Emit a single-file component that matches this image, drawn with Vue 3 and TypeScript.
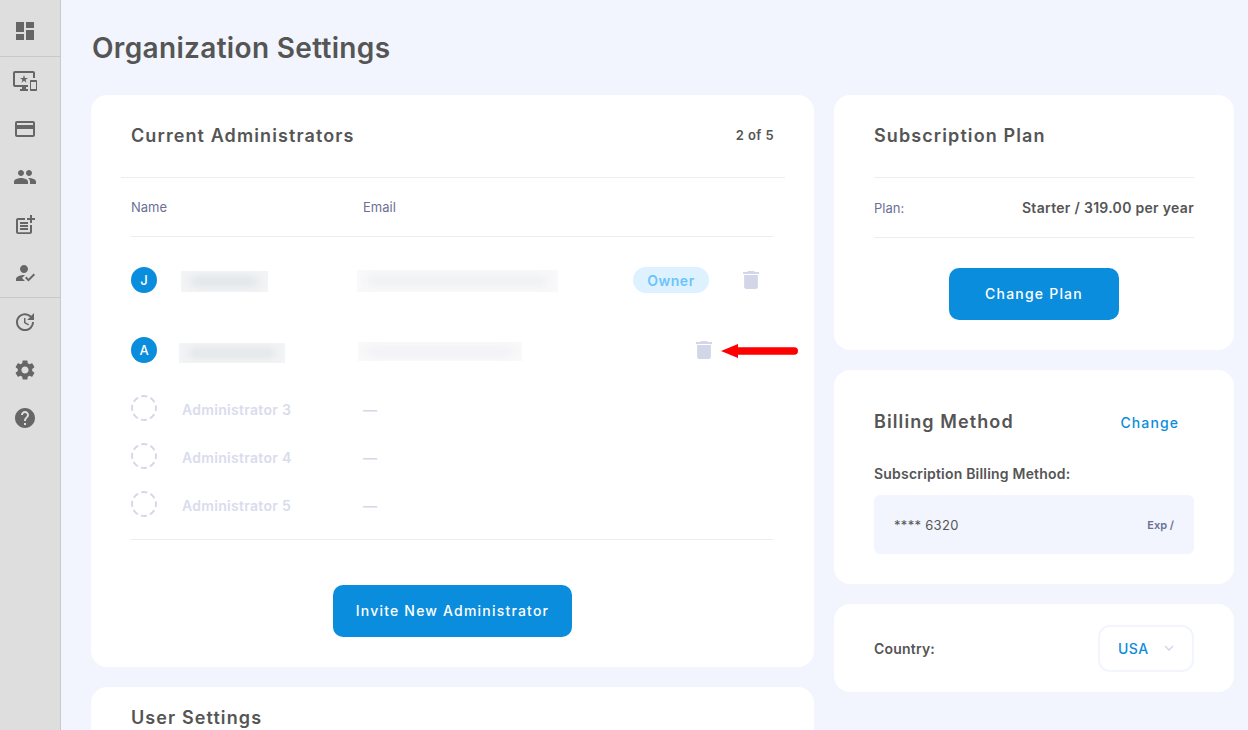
<script setup lang="ts">
interface NavIcon { paths: string[] }
const groups: NavIcon[][] = [
  [{ paths: ['M3 13h8V3H3v10zm0 8h8v-6H3v6zm10 0h8V11h-8v10zm0-18v6h8V3h-8z'] }],
  [
    { paths: ['M23 11.01L18 11c-.55 0-1 .45-1 1v9c0 .55.45 1 1 1h5c.55 0 1-.45 1-1v-9c0-.55-.45-.99-1-.99zM23 20h-5v-7h5v7zM20 2H2C.89 2 0 2.89 0 4v12c0 1.1.89 2 2 2h7v2H7v2h8v-2h-2v-2h2v-2H2V4h18v5h2V4c0-1.11-.9-2-2-2zm-8.03 7L11 6l-.97 3H7l2.47 1.76-.94 2.91 2.47-1.8 2.47 1.8-.94-2.91L15 9h-3.03z'] },
    { paths: ['M20 4H4c-1.11 0-1.99.89-1.99 2L2 18c0 1.11.89 2 2 2h16c1.11 0 2-.89 2-2V6c0-1.11-.89-2-2-2zm0 14H4v-6h16v6zm0-10H4V6h16v2z'] },
    { paths: ['M16 11c1.66 0 2.99-1.34 2.99-3S17.66 5 16 5c-1.66 0-3 1.34-3 3s1.34 3 3 3zm-8 0c1.66 0 2.99-1.34 2.99-3S9.66 5 8 5C6.34 5 5 6.34 5 8s1.34 3 3 3zm0 2c-2.33 0-7 1.17-7 3.5V19h14v-2.5c0-2.33-4.67-3.5-7-3.5zm8 0c-.29 0-.62.02-.97.05 1.16.84 1.97 1.97 1.97 3.45V19h6v-2.5c0-2.33-4.67-3.5-7-3.5z'] },
    { paths: ['M17 19.22H5V7h7V5H5c-1.1 0-2 .9-2 2v12c0 1.1.9 2 2 2h12c1.1 0 2-.9 2-2v-7h-2v7.22z', 'M19 2h-2v3h-3c.01.01 0 2 0 2h3v2.99c.01.01 2 0 2 0V7h3V5h-3V2z', 'M7 9h8v2H7z', 'M7 12v2h8v-2h-3z', 'M7 15h8v2H7z'] },
    { paths: ['M9 17l3-2.94c-.39-.04-.68-.06-1-.06-2.67 0-8 1.34-8 4v2h9l-3-3zm2-5c2.21 0 4-1.79 4-4s-1.79-4-4-4-4 1.79-4 4 1.79 4 4 4', 'M15.47 20.5L12 17l1.4-1.41 2.07 2.07 5.13-5.16 1.4 1.41z'] },
  ],
  [
    { paths: ['M21 10.12h-6.78l2.74-2.82c-2.73-2.7-7.15-2.8-9.88-.1-2.73 2.71-2.73 7.08 0 9.79s7.15 2.71 9.88 0C18.32 15.65 19 14.08 19 12.1h2c0 1.98-.88 4.55-2.64 6.29-3.51 3.48-9.21 3.48-12.72 0-3.5-3.47-3.53-9.11-.02-12.58s9.14-3.47 12.65 0L21 3v7.12zM12.5 8v4.25l3.5 2.08-.72 1.21L11 13V8h1.5z'] },
    { paths: ['M19.14 12.94c.04-.3.06-.61.06-.94 0-.32-.02-.64-.07-.94l2.03-1.58c.18-.14.23-.41.12-.61l-1.92-3.32c-.12-.22-.37-.29-.59-.22l-2.39.96c-.5-.38-1.03-.7-1.62-.94l-.36-2.54c-.04-.24-.24-.41-.48-.41h-3.84c-.24 0-.43.17-.47.41l-.36 2.54c-.59.24-1.13.57-1.62.94l-2.39-.96c-.22-.08-.47 0-.59.22L2.74 8.87c-.12.21-.08.47.12.61l2.03 1.58c-.05.3-.09.63-.09.94s.02.64.07.94l-2.03 1.58c-.18.14-.23.41-.12.61l1.92 3.32c.12.22.37.29.59.22l2.39-.96c.5.38 1.03.7 1.62.94l.36 2.54c.05.24.24.41.48.41h3.84c.24 0 .44-.17.47-.41l.36-2.54c.59-.24 1.13-.56 1.62-.94l2.39.96c.22.08.47 0 .59-.22l1.92-3.32c.12-.22.07-.47-.12-.61l-2.01-1.58zM12 15.6c-1.98 0-3.6-1.62-3.6-3.6s1.62-3.6 3.6-3.6 3.6 1.62 3.6 3.6-1.62 3.6-3.6 3.6z'] },
    { paths: ['M12 2C6.48 2 2 6.48 2 12s4.48 10 10 10 10-4.48 10-10S17.52 2 12 2zm1 17h-2v-2h2v2zm2.07-7.75l-.9.92C13.45 12.9 13 13.5 13 15h-2v-.5c0-1.1.45-2.1 1.17-2.83l1.24-1.26c.37-.36.59-.86.59-1.41 0-1.1-.9-2-2-2s-2 .9-2 2H8c0-2.21 1.79-4 4-4s4 1.79 4 4c0 .88-.36 1.68-.93 2.25z'] },
  ],
]
const trash = 'M6 19c0 1.1.9 2 2 2h8c1.1 0 2-.9 2-2V7H6v12zM19 4h-3.5l-1-1h-5l-1 1H5v2h14V4z'
const placeholders = ['Administrator 3', 'Administrator 4', 'Administrator 5']
</script>

<template>
  <div class="shell">
    <nav class="sidebar">
      <div v-for="(group, g) in groups" :key="g" class="nav-group">
        <div v-for="(icon, i) in group" :key="i" class="nav-item">
          <svg viewBox="0 0 24 24" width="24" height="24"><path v-for="p in icon.paths" :key="p" :d="p" /></svg>
        </div>
      </div>
    </nav>

    <main class="main">
      <h1 class="title">Organization Settings</h1>
      <div class="columns">
        <div class="col col-left">
          <section class="card admins">
            <header class="admins-head">
              <h2 class="heading">Current Administrators</h2>
              <span class="count">2 of 5</span>
            </header>
            <div class="admins-body">
              <div class="table-head">
                <span>Name</span>
                <span>Email</span>
              </div>

              <div class="row row-one">
                <span class="avatar">J</span>
                <span class="blur-name blur-a"></span>
                <span class="blur-email blur-c"></span>
                <span class="badge">Owner</span>
                <svg class="trash" viewBox="5 3 14 18" preserveAspectRatio="none" width="16" height="18"><path :d="trash" /></svg>
              </div>

              <div class="row row-two">
                <span class="avatar">A</span>
                <span class="blur-name blur-b"></span>
                <span class="blur-email blur-d"></span>
                <svg class="trash" viewBox="5 3 14 18" preserveAspectRatio="none" width="16" height="18"><path :d="trash" /></svg>
                <svg class="arrow" viewBox="0 0 77 16" width="77" height="16">
                  <path d="M0 8L17 1V4.3H73.3a3.7 3.7 0 0 1 0 7.4H17V15z" fill="#ff0000" />
                </svg>
              </div>

              <div v-for="name in placeholders" :key="name" class="row row-empty">
                <svg class="avatar-empty" viewBox="0 0 26 26" width="26" height="26">
                  <circle cx="13" cy="13" r="12" fill="none" stroke="#d5d8ea" stroke-width="2" stroke-dasharray="6 3.42" stroke-dashoffset="3" />
                </svg>
                <span class="empty-name">{{ name }}</span>
                <span class="empty-dash">—</span>
              </div>
            </div>
            <div class="admins-foot">
              <button class="btn btn-invite">Invite New Administrator</button>
            </div>
          </section>

          <section class="card user-settings">
            <h2 class="heading">User Settings</h2>
          </section>
        </div>

        <div class="col col-right">
          <section class="card plan">
            <h2 class="heading plan-title">Subscription Plan</h2>
            <div class="plan-row">
              <span class="plan-label">Plan:</span>
              <strong class="plan-value">Starter / 319.00 per year</strong>
            </div>
            <div class="plan-foot">
              <button class="btn btn-plan">Change Plan</button>
            </div>
          </section>

          <section class="card billing">
            <div class="billing-head">
              <h2 class="heading">Billing Method</h2>
              <a class="change">Change</a>
            </div>
            <div class="billing-label">Subscription Billing Method:</div>
            <div class="billing-box">
              <span class="card-num">**** 6320</span>
              <span class="exp">Exp /</span>
            </div>
          </section>

          <section class="card country">
            <span class="country-label">Country:</span>
            <div class="select">
              <span>USA</span>
              <svg viewBox="0 0 10 6" width="10" height="6"><path d="M1 1l4 4 4-4" fill="none" stroke="#d5d8ea" stroke-width="1.6" /></svg>
            </div>
          </section>
        </div>
      </div>
    </main>
  </div>
</template>

<style>
html, body { margin: 0; background: #f2f5fd; overflow: hidden; }
</style>

<style scoped>
.shell {
  display: flex;
  height: 730px;
  overflow: hidden;
  background: #f2f5fd;
  font-family: Inter, "Liberation Sans", sans-serif;
  color: #555;
}
.sidebar {
  width: 60px;
  flex: none;
  background: #dedede;
  border-right: 1px solid #c9c9c9;
}
.nav-group { border-bottom: 1px solid #c8c8c8; }
.nav-group:first-child { padding: 7px 0 1px; }
.nav-group:last-child { border-bottom: none; }
.nav-item {
  height: 48px;
  display: flex;
  align-items: center;
  padding-left: 13px;
}
.nav-item svg { fill: #666; }

.main { flex: 1; padding-left: 30px; min-width: 0; }
.title {
  margin: 0;
  padding: 30px 0 0 1px;
  height: 95px;
  box-sizing: border-box;
  font-size: 28px;
  line-height: 36px;
  font-weight: 600;
  color: #555;
  letter-spacing: 0.33px;
}
.columns { display: flex; gap: 20px; }
.col { display: flex; flex-direction: column; gap: 20px; }
.col-left { width: 723px; }
.col-right { width: 400px; }
.card { background: #fff; border-radius: 16px; }
.heading {
  margin: 0;
  font-size: 18px;
  line-height: 24px;
  font-weight: 600;
  letter-spacing: 1.1px;
  color: #555;
}

.admins { height: 572px; display: flex; flex-direction: column; }
.admins-head {
  margin: 0 29px 0 30px;
  height: 83px;
  box-sizing: border-box;
  border-bottom: 1px solid #ecedf3;
  padding: 29px 11px 0 10px;
  display: flex;
  justify-content: space-between;
  align-items: flex-start;
}
.count { font-size: 13px; line-height: 24px; font-weight: 600; letter-spacing: 0.4px; color: #555; margin-top: -1px; }
.admins-body {
  margin: 0 41px 0 40px;
  height: 362px;
  box-sizing: border-box;
  border-bottom: 1px solid #ecedf3;
}
.table-head {
  height: 59px;
  box-sizing: border-box;
  border-bottom: 1px solid #ecedf3;
  display: grid;
  grid-template-columns: 232px 1fr;
  align-items: center;
  font-size: 13px;
  color: #6b7095;
}
.row { display: flex; align-items: center; position: relative; }
.row-one { height: 86px; }
.row-two { height: 54px; }
.row-empty { height: 48px; }
.row-two + .row-empty { margin-top: 7px; }
.avatar {
  width: 26px;
  height: 26px;
  border-radius: 50%;
  flex: none;
  background: #0a8ddc;
  color: #fff;
  font-size: 13px;
  font-weight: 500;
  display: flex;
  align-items: center;
  justify-content: center;
}
.avatar-empty { flex: none; }
.blur-name, .blur-email {
  display: block;
  flex: none;
  position: relative;
  overflow: hidden;
}
.blur-name { background: #f3f4f5; }
.blur-email { background: #f9f9fa; }
.blur-name::before, .blur-email::before {
  content: "";
  position: absolute;
  inset: 6px 10px;
  filter: blur(5px);
}
.blur-name::before { background: #dde2e5; }
.blur-email::before { background: #eeeff3; }
.blur-a { width: 87px; height: 21px; margin: 3px 0 0 24px; }
.blur-b { width: 106px; height: 20px; margin: 6px 0 0 22px; }
.blur-c { width: 201px; height: 22px; margin: 2px 0 0 89px; }
.blur-d { width: 164px; height: 19px; margin: 3px 0 0 73px; }
.badge {
  width: 76px;
  height: 26px;
  margin-left: 75px;
  border-radius: 13px;
  background: #def1ff;
  color: #6cc4fb;
  font-size: 14px;
  font-weight: 600;
  letter-spacing: 0.5px;
  display: flex;
  align-items: center;
  justify-content: center;
  flex: none;
}
.trash { fill: #d3d6e8; flex: none; }
.row-one .trash { margin-left: 34px; }
.row-two .trash { margin-left: 174px; }
.arrow { position: absolute; left: 590px; top: 20px; }
.empty-name {
  margin: 2px 0 0 25px;
  width: 181px;
  font-size: 14px;
  font-weight: 600;
  letter-spacing: 0.3px;
  color: #d9dced;
}
.empty-dash { margin-top: 2px; color: #d5d8ea; font-size: 14px; font-weight: 600; }

.admins-foot { flex: 1; display: flex; justify-content: center; padding-top: 45px; }
.btn {
  border: none;
  height: 52px;
  border-radius: 10px;
  background: #0a8ddc;
  color: #fff;
  font-family: Inter, sans-serif;
  font-size: 14px;
  font-weight: 500;
  letter-spacing: 1.2px;
  padding: 0 0 2px;
}
.btn-invite { width: 239px; }
.btn-plan { width: 170px; }

.user-settings { height: 100px; padding: 19px 40px; box-sizing: border-box; }

.plan { height: 255px; padding: 0 40px; box-sizing: border-box; }
.plan-title { height: 83px; padding-top: 29px; box-sizing: border-box; border-bottom: 1px solid #ecedf3; }
.plan-row {
  height: 60px;
  box-sizing: border-box;
  border-bottom: 1px solid #ecedf3;
  display: flex;
  justify-content: space-between;
  align-items: center;
}
.plan-label { font-size: 13px; color: #6b7095; }
.plan-value { font-size: 14px; font-weight: 600; letter-spacing: 0.3px; color: #555; }
.plan-foot { display: flex; justify-content: center; padding-top: 30px; }

.billing { height: 214px; padding: 0 40px; box-sizing: border-box; }
.billing-head {
  display: flex;
  justify-content: space-between;
  align-items: center;
  padding: 40px 15px 0 0;
}
.change { font-size: 14px; font-weight: 500; letter-spacing: 1.1px; color: #0a8ddc; }
.billing-label { margin-top: 31px; font-size: 14px; line-height: 18px; font-weight: 600; letter-spacing: 0.2px; color: #555; }
.billing-box {
  margin-top: 12px;
  height: 59px;
  border-radius: 6px;
  background: #f2f5fd;
  display: flex;
  justify-content: space-between;
  align-items: center;
  padding: 0 20px;
}
.card-num { font-size: 13px; letter-spacing: 0.3px; color: #555; }
.exp { font-size: 11px; font-weight: 600; color: #6b7095; }

.country {
  height: 88px;
  padding: 0 40px;
  box-sizing: border-box;
  display: flex;
  justify-content: space-between;
  align-items: center;
}
.country-label { font-size: 14px; font-weight: 600; letter-spacing: 0.2px; color: #555; }
.select {
  width: 96px;
  height: 47px;
  box-sizing: border-box;
  border: 2px solid #f2f5fd;
  border-radius: 12px;
  display: flex;
  align-items: center;
  justify-content: space-between;
  padding: 0 18px 0 18px;
  color: #0a8ddc;
  font-size: 14px;
  font-weight: 500;
  letter-spacing: 0.5px;
}
</style>
